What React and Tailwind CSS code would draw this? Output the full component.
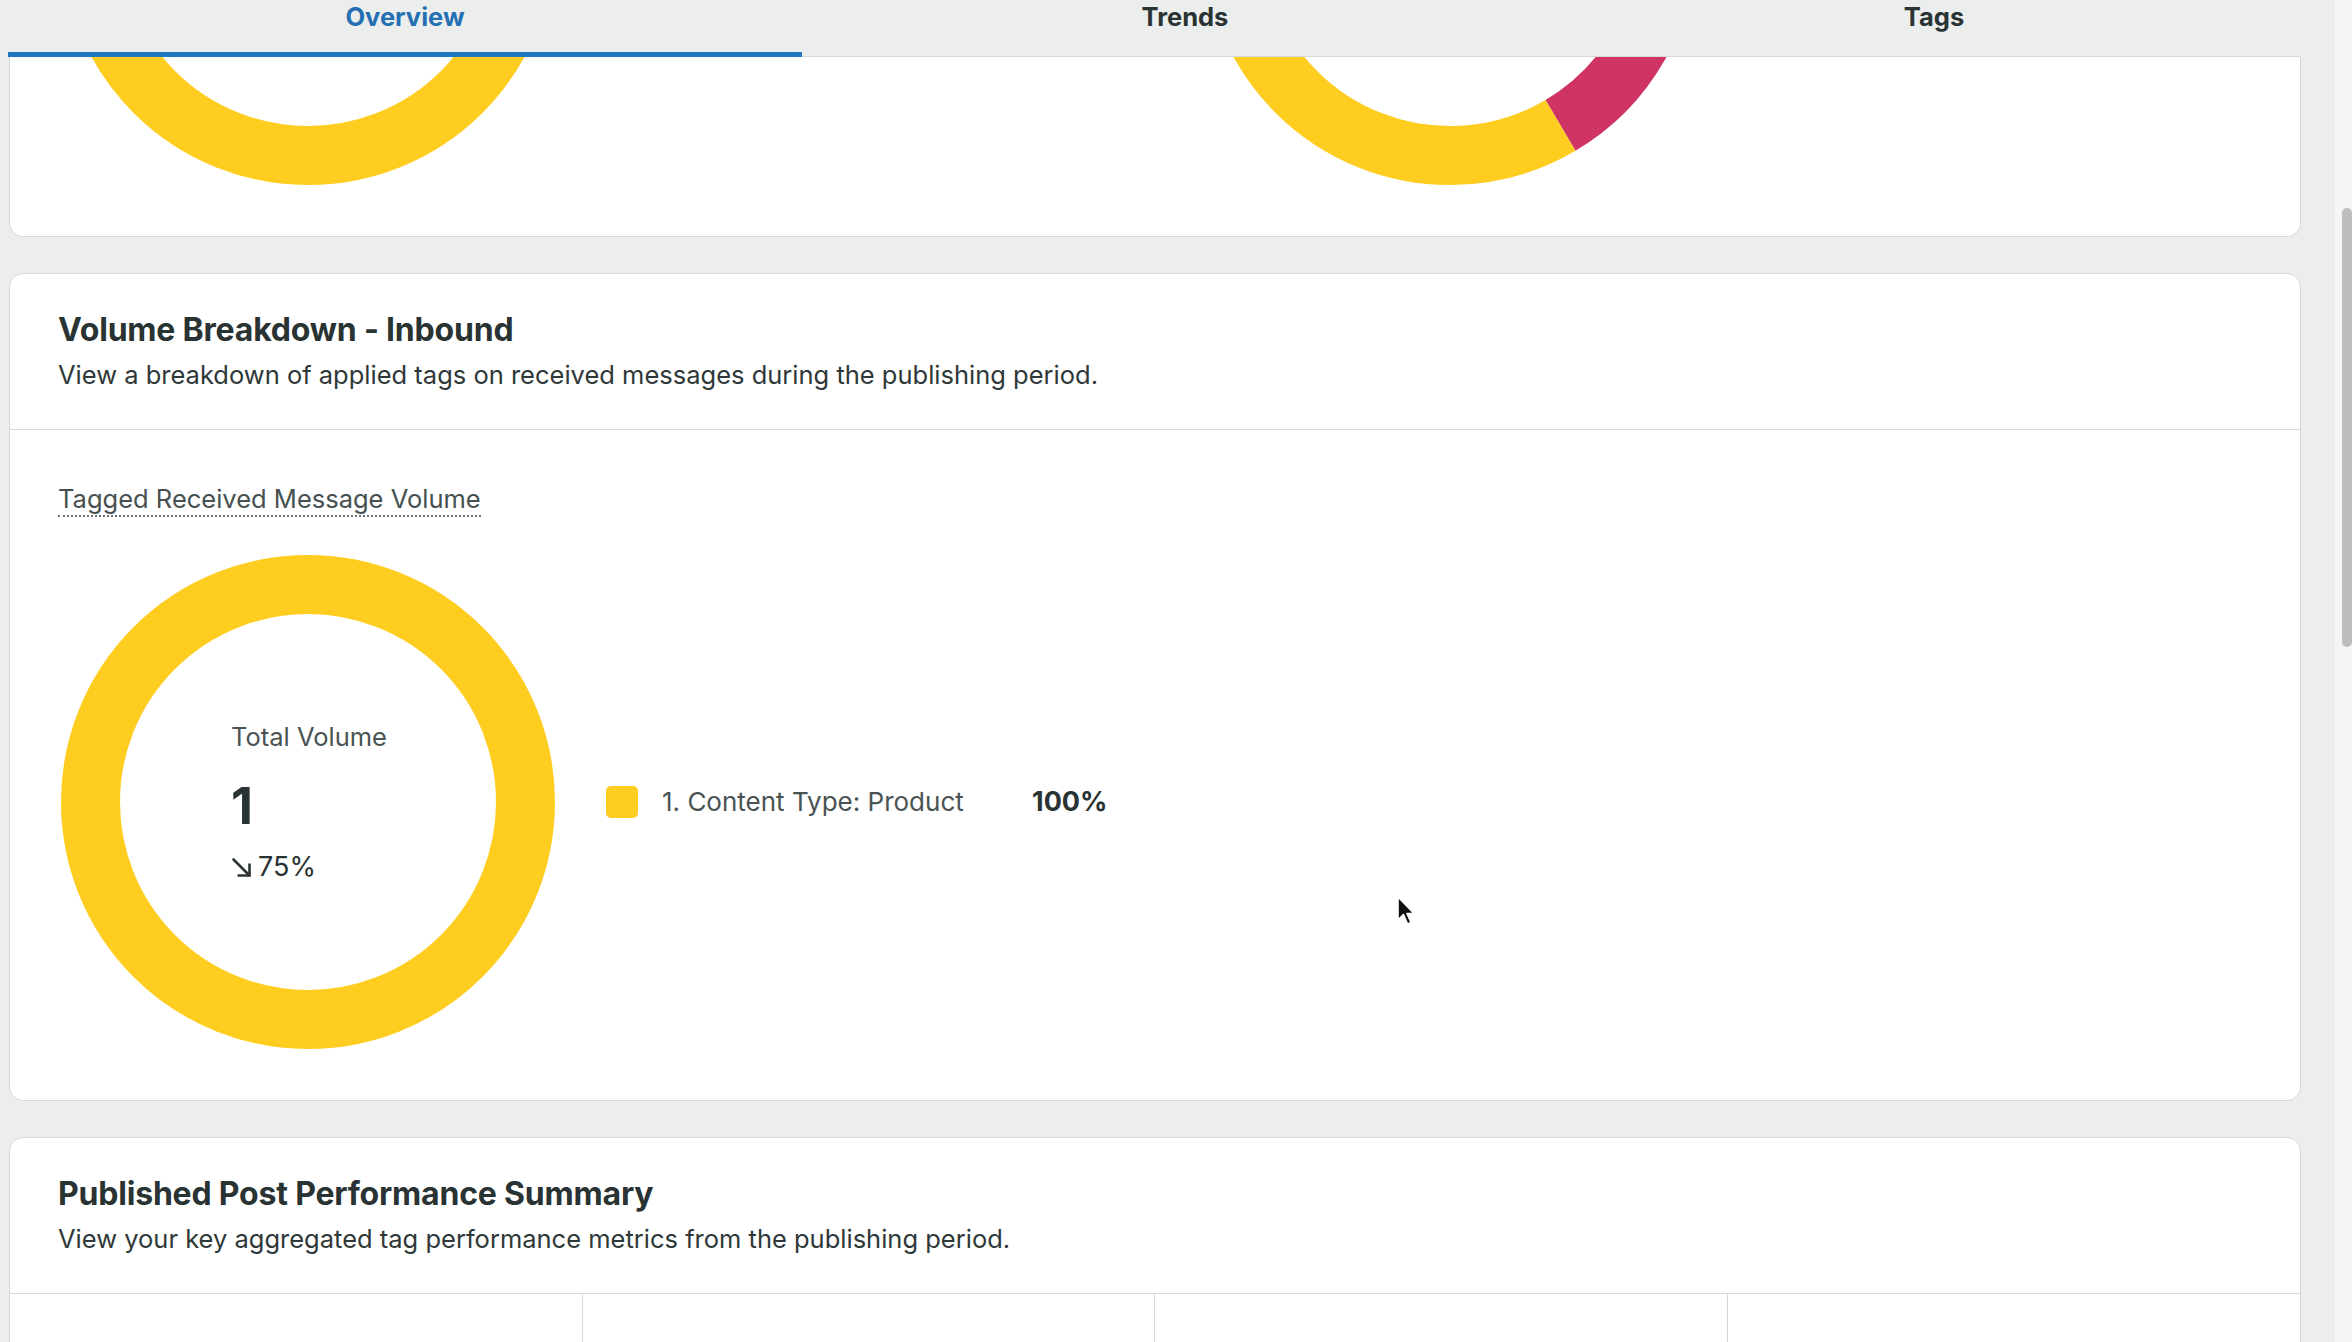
const YELLOW = "#ffcd1f";
const RED = "#cf3465";

const tabs = [
  { label: "Overview", width: "w-[794px]", active: true },
  { label: "Trends", width: "w-[766px]" },
  { label: "Tags", width: "w-[732px]" },
];

// ring chart drawn with dashed circle strokes, starting at 12 o'clock
function Donut({ segments, children }) {
  const size = 494;
  const stroke = 59;
  const r = (size - stroke) / 2;
  const c = 2 * Math.PI * r;
  let offset = 0;
  return (
    <div className="relative h-[494px] w-[494px] shrink-0">
      <svg width={size} height={size} viewBox={`0 0 ${size} ${size}`} className="-rotate-90">
        {segments.map((s, i) => {
          const len = s.value * c;
          const el = (
            <circle
              key={i}
              cx={size / 2}
              cy={size / 2}
              r={r}
              fill="none"
              stroke={s.color}
              strokeWidth={stroke}
              strokeDasharray={`${len} ${c - len}`}
              strokeDashoffset={-offset}
            />
          );
          offset += len;
          return el;
        })}
      </svg>
      {children && <div className="absolute inset-0 flex items-center justify-center">{children}</div>}
    </div>
  );
}

function TrendDown() {
  return (
    <svg width="21" height="21" viewBox="0 0 21 21" fill="none" stroke="currentColor" strokeWidth="2.6">
      <path d="M2.5 2.5 L18 18" strokeLinecap="round" />
      <path d="M18.5 6.5 V18.5 H6.5" strokeLinecap="butt" />
    </svg>
  );
}

function CardHeader({ title, subtitle }) {
  return (
    <div className="border-b border-[#d6d8da] px-[48px] pt-[36px] pb-[36px]">
      <h2 className="text-[32px] font-bold leading-[40px] tracking-[-0.2px] text-[#2a3333]">{title}</h2>
      <p className="mt-[7px] text-[25.5px] leading-[36px] text-[#2f3838]">{subtitle}</p>
    </div>
  );
}

function Cursor() {
  return (
    <svg
      className="pointer-events-none absolute left-[1396px] top-[895px]"
      width="20"
      height="32"
      viewBox="0 0 20 32"
    >
      <path
        d="M2 2 L2 25 L7.5 19.5 L11.5 29 L15 27.5 L11 18.5 L18 18.5 Z"
        fill="#111"
        stroke="#fff"
        strokeWidth="1.6"
        strokeLinejoin="round"
      />
    </svg>
  );
}

export default function App() {
  return (
    <div
      className="relative flex h-[1342px] w-full overflow-hidden bg-[#eceded] text-[#2a3333]"
      style={{ fontFamily: "Inter, 'Noto Sans', sans-serif" }}
    >
      <main className="flex w-[2335px] shrink-0 flex-col pl-[8px]">
        {/* tab strip */}
        <nav className="flex h-[57px] shrink-0">
          {tabs.map((t) => (
            <div
              key={t.label}
              className={`${t.width} flex justify-center pt-[1px] ${
                t.active ? "border-b-[5px] border-[#1f78c1]" : "border-b border-[#d6d8da]"
              }`}
            >
              <span
                className={`text-[25.5px] font-bold leading-[32px] ${
                  t.active ? "text-[#2470b2]" : "text-[#2a3333]"
                }`}
              >
                {t.label}
              </span>
            </div>
          ))}
        </nav>

        <div className="flex w-[2293px] flex-col gap-[36px] pl-[1px]">
          {/* previous section, scrolled mostly out of view */}
          <section className="h-[180px] overflow-hidden rounded-b-[14px] border-x border-b border-[#d6d8da] bg-white">
            <div className="mt-[-366px] flex gap-[648px] pl-[51px]">
              <Donut segments={[{ value: 1, color: YELLOW }]} />
              <Donut
                segments={[
                  { value: 0.415, color: RED },
                  { value: 0.585, color: YELLOW },
                ]}
              />
            </div>
          </section>

          {/* volume breakdown */}
          <section className="h-[828px] rounded-[14px] border border-[#d6d8da] bg-white">
            <CardHeader
              title="Volume Breakdown - Inbound"
              subtitle="View a breakdown of applied tags on received messages during the publishing period."
            />
            <div className="px-[48px] pt-[52px]">
              <span className="inline-block border-b-2 border-dotted border-[#6b7474] text-[25.5px] leading-[33px] text-[#465050]">
                Tagged Received Message Volume
              </span>
              <div className="mt-[38px] flex items-center pl-[3px]">
                <Donut segments={[{ value: 1, color: YELLOW }]}>
                  <div className="flex flex-col items-start pl-[2px]">
                    <span className="text-[25.5px] leading-[36px] text-[#4a5353]">Total Volume</span>
                    <span className="mt-[21px] text-[51px] font-bold leading-[60px] text-[#2a3333]">1</span>
                    <span className="mt-[13px] flex items-center gap-[6px] text-[27px] leading-[36px] text-[#2a3333]">
                      <TrendDown />
                      75%
                    </span>
                  </div>
                </Donut>
                <div className="ml-[51px] flex items-center">
                  <span className="h-[32px] w-[32px] rounded-[5px]" style={{ backgroundColor: YELLOW }} />
                  <span className="ml-[24px] w-[370px] text-[26px] leading-[36px] text-[#4a5353]">
                    1. Content Type: Product
                  </span>
                  <span className="text-[27px] font-bold leading-[36px] text-[#2a3333]">100%</span>
                </div>
              </div>
            </div>
          </section>

          {/* post performance */}
          <section className="h-[400px] rounded-t-[14px] border border-[#d6d8da] bg-white">
            <CardHeader
              title="Published Post Performance Summary"
              subtitle="View your key aggregated tag performance metrics from the publishing period."
            />
            <div className="grid h-[300px] grid-cols-4 divide-x divide-[#d6d8da]">
              <div />
              <div />
              <div />
              <div />
            </div>
          </section>
        </div>
      </main>

      {/* scrollbar */}
      <div className="flex-1 bg-[#f4f5f5] pl-[7px] pt-[208px]">
        <div className="h-[439px] w-[10px] rounded-full bg-[#bcbdbe]" />
      </div>

      <Cursor />
    </div>
  );
}
